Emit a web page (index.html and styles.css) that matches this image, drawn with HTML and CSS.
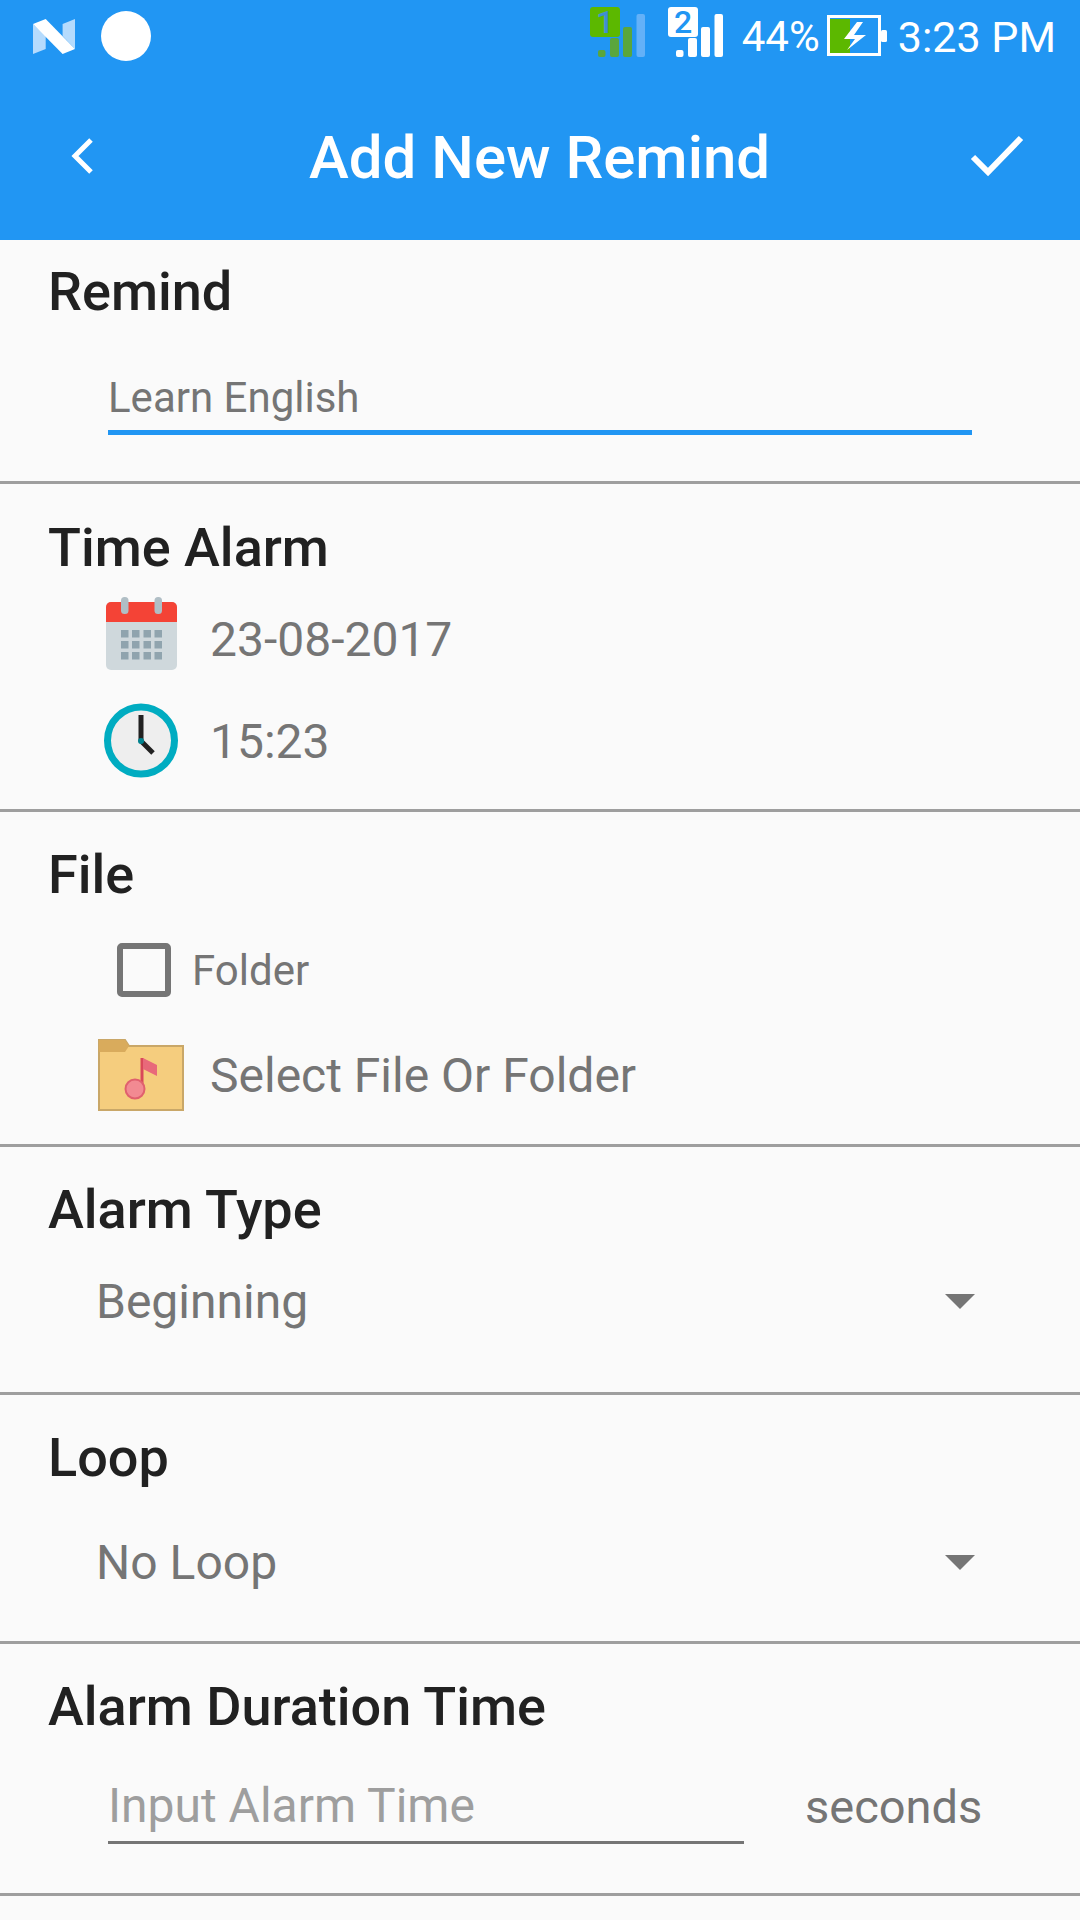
FILE: index.html
```html
<!DOCTYPE html>
<html lang="en">

<head>
    <meta charset="UTF-8">
    <title>Add New Remind</title>
    <link rel="stylesheet" href="styles.css">
</head>

<body>
    <header class="top">
        <div class="status">
            <div class="status-left">
                <svg class="n-logo" width="42" height="35" viewBox="0 0 42 35">
                    <path d="M0 5L12.7 17V30L0 35Z" fill="#b5dbfd"/>
                    <path d="M29.6 5L42 0V30L29.6 17Z" fill="#b5dbfd"/>
                    <path d="M0 5L12.7 0L42 30L29.6 35Z" fill="#fff"/>
                </svg>
                <span class="dot"></span>
            </div>
            <div class="status-right">
                <svg class="sim" width="55" height="57" viewBox="0 -7 55 57">
                    <rect x="8" y="43" width="7.5" height="7" rx="2" fill="#5aa63c"/>
                    <rect x="20" y="31" width="9" height="19" rx="2" fill="#5aa63c"/>
                    <rect x="33" y="20" width="9" height="30" rx="2" fill="#5aa63c"/>
                    <rect x="46.5" y="7" width="8.5" height="43" rx="2" fill="#63b1f8"/>
                    <rect x="0" y="0" width="30" height="30" rx="3" fill="#5cb800"/>
                    <text x="15" y="26" class="sim-num sim-num-green">1</text>
                </svg>
                <svg class="sim sim-two" width="55" height="57" viewBox="0 -7 55 57">
                    <rect x="8" y="43" width="7.5" height="7" rx="2" fill="#fff"/>
                    <rect x="20" y="31" width="9" height="19" rx="2" fill="#fff"/>
                    <rect x="33" y="20" width="9" height="30" rx="2" fill="#fff"/>
                    <rect x="46.5" y="7" width="8.5" height="43" rx="2" fill="#fff"/>
                    <rect x="0" y="0" width="30" height="30" rx="3" fill="#fff"/>
                    <text x="15" y="26" class="sim-num">2</text>
                </svg>
                <span class="percent">44%</span>
                <svg class="battery" width="60" height="42" viewBox="0 0 60 42">
                    <rect x="3" y="4" width="20" height="34" fill="#5cb800"/>
                    <rect x="1.5" y="1.5" width="51" height="38" fill="none" stroke="#fff" stroke-width="3"/>
                    <rect x="54" y="15" width="6" height="12" rx="1.5" fill="#fff"/>
                    <path d="M30 7H36L27 20H39L20 35L28 24H17Z" fill="#fff"/>
                </svg>
                <span class="clock">3:23 PM</span>
            </div>
        </div>
        <div class="toolbar">
            <svg width="24" height="38" viewBox="0 0 24 38" class="back">
                <path d="M21 3L5 19L21 35" fill="none" stroke="#fff" stroke-width="5"/>
            </svg>
            <h1>Add New Remind</h1>
            <svg width="54" height="42" viewBox="0 0 54 42" class="done">
                <path d="M3 22L18 37L51 3" fill="none" stroke="#fff" stroke-width="6"/>
            </svg>
        </div>
    </header>

    <section class="block block-remind">
        <h2>Remind</h2>
        <div class="field field-active">Learn English</div>
    </section>

    <section class="block block-time">
        <h2>Time Alarm</h2>
        <div class="row row-date">
            <svg class="row-icon" width="76" height="84" viewBox="0 0 76 84">
                <rect x="3" y="5" width="71" height="68" rx="5" fill="#cfd8dc"/>
                <path d="M3 25V10a5 5 0 0 1 5-5h61a5 5 0 0 1 5 5v15Z" fill="#f44336"/>
                <rect x="18" y="0" width="7.5" height="17" rx="3.5" fill="#b0bec5"/>
                <rect x="51.5" y="0" width="7.5" height="17" rx="3.5" fill="#b0bec5"/>
                <g fill="#90a4ae">
                    <rect x="18" y="33" width="7.5" height="7.5"/><rect x="29" y="33" width="7.5" height="7.5"/><rect x="40.5" y="33" width="7.5" height="7.5"/><rect x="51.5" y="33" width="7.5" height="7.5"/>
                    <rect x="18" y="44" width="7.5" height="7.5"/><rect x="29" y="44" width="7.5" height="7.5"/><rect x="40.5" y="44" width="7.5" height="7.5"/><rect x="51.5" y="44" width="7.5" height="7.5"/>
                    <rect x="18" y="55" width="7.5" height="7.5"/><rect x="29" y="55" width="7.5" height="7.5"/><rect x="40.5" y="55" width="7.5" height="7.5"/><rect x="51.5" y="55" width="7.5" height="7.5"/>
                </g>
            </svg>
            <span>23-08-2017</span>
        </div>
        <div class="row">
            <svg class="row-icon" width="76" height="76" viewBox="0 0 76 76">
                <circle cx="38" cy="37.5" r="33.5" fill="#eeeeee" stroke="#00acc1" stroke-width="7"/>
                <path d="M38 12V38" stroke="#212121" stroke-width="5" fill="none"/>
                <path d="M38 38L50 50" stroke="#212121" stroke-width="5" fill="none"/>
                <circle cx="38" cy="38" r="3" fill="#00838f"/>
            </svg>
            <span>15:23</span>
        </div>
    </section>

    <section class="block block-file">
        <h2>File</h2>
        <div class="check-row">
            <span class="checkbox"></span>
            <span>Folder</span>
        </div>
        <div class="row row-file">
            <svg class="folder" width="86" height="72" viewBox="0 0 86 72">
                <path d="M1 1H27L31 7H85V71H1Z" fill="#f5cd7e" stroke="#c9a768" stroke-width="2"/>
                <path d="M1 1H27L31 7L27 13H1Z" fill="#d9ab5c"/>
                <path d="M44 19V50" stroke="#d9485a" stroke-width="3" fill="none"/>
                <path d="M45 19L59 26V37L45 30Z" fill="#e8697a"/>
                <circle cx="37" cy="50" r="9.5" fill="#f28a92" stroke="#e0606e" stroke-width="2"/>
            </svg>
            <span>Select File Or Folder</span>
        </div>
    </section>

    <section class="block block-type">
        <h2>Alarm Type</h2>
        <div class="spinner spinner-type">
            <span>Beginning</span>
            <span class="arrow"></span>
        </div>
    </section>

    <section class="block block-loop">
        <h2>Loop</h2>
        <div class="spinner spinner-loop">
            <span>No Loop</span>
            <span class="arrow"></span>
        </div>
    </section>

    <section class="block block-duration">
        <h2>Alarm Duration Time</h2>
        <div class="duration-row">
            <div class="field field-hint">Input Alarm Time</div>
            <span class="unit">seconds</span>
        </div>
    </section>
</body>

</html>
```

FILE: styles.css
```css
* {
    box-sizing: border-box;
}

html,
body {
    height: 100%;
}

body {
    margin: 0;
    background: #fafafa;
    font-family: Roboto, sans-serif;
    color: #757575;
    overflow: hidden;
}

.top {
    height: 240px;
    background: #2196f3;
    color: #fff;
}

.status {
    height: 72px;
    display: flex;
    justify-content: space-between;
    padding: 0 24px 0 33px;
}

.status-left {
    display: flex;
    align-items: center;
    gap: 26px;
}

.n-logo {
    display: block;
}

.dot {
    width: 50px;
    height: 50px;
    border-radius: 50%;
    background: #fff;
}

.status-right {
    display: flex;
    align-items: flex-start;
    font-size: 42px;
}

.sim {
    display: block;
}

.sim-two {
    margin-left: 23px;
}

.sim-num {
    font-size: 32px;
    font-weight: 500;
    text-anchor: middle;
    fill: #2196f3;
}

.sim-num-green {
    fill: #3f8fd0;
}

.percent {
    margin-left: 19px;
    line-height: 74px;
}

.battery {
    margin-left: 7px;
    margin-top: 15px;
}

.clock {
    margin-left: 11px;
    font-size: 43px;
    line-height: 74px;
}

.toolbar {
    height: 168px;
    display: flex;
    align-items: center;
    padding: 0 56px 0 70px;
}

.toolbar h1 {
    margin: 3px 0 0 215px;
    font-size: 60px;
    font-weight: 500;
}

.done {
    margin-left: auto;
}

.block {
    border-bottom: 3px solid #9e9e9e;
    padding-left: 48px;
}

.block h2 {
    margin: 0;
    font-size: 54px;
    font-weight: 500;
    line-height: 60px;
    color: #212121;
}

.block-remind {
    height: 244px;
    padding-top: 22px;
}

.block-time {
    height: 328px;
    padding-top: 34px;
}

.block-file {
    height: 335px;
    padding-top: 33px;
}

.block-type {
    height: 248px;
    padding-top: 33px;
}

.block-loop {
    height: 249px;
    padding-top: 33px;
}

.block-duration {
    height: 252px;
    padding-top: 33px;
}

.field {
    font-size: 42px;
    margin-left: 60px;
    border-bottom: 3px solid #757575;
}

.field-active {
    margin-top: 47px;
    width: 864px;
    height: 66px;
    line-height: 58px;
    border-bottom: 5px solid #2196f3;
}

.row {
    display: flex;
    align-items: center;
    font-size: 48px;
    height: 102px;
    padding-left: 55px;
}

.row-icon {
    display: block;
}

.row span {
    margin-left: 31px;
}

.row-date {
    margin-top: 10px;
}

.check-row {
    display: flex;
    align-items: center;
    font-size: 42px;
    height: 90px;
    margin-top: 20px;
    padding-left: 69px;
}

.checkbox {
    width: 54px;
    height: 54px;
    border: 6px solid #757575;
    border-radius: 5px;
    margin-right: 21px;
}

.row-file {
    margin-top: 9px;
    padding-left: 50px;
}

.row-file span {
    margin-left: 26px;
}

.spinner {
    display: flex;
    align-items: center;
    justify-content: space-between;
    height: 80px;
    padding: 0 105px 0 48px;
    font-size: 48px;
}

.spinner-type {
    margin-top: 21px;
}

.spinner-loop {
    margin-top: 34px;
}

.arrow {
    border-left: 15px solid transparent;
    border-right: 15px solid transparent;
    border-top: 15px solid #757575;
}

.duration-row {
    display: flex;
    align-items: flex-end;
    margin-top: 33px;
}

.field-hint {
    width: 636px;
    height: 74px;
    line-height: 72px;
    font-size: 48px;
    color: #9e9e9e;
}

.unit {
    font-size: 47px;
    margin-left: 61px;
    line-height: 74px;
}
```
